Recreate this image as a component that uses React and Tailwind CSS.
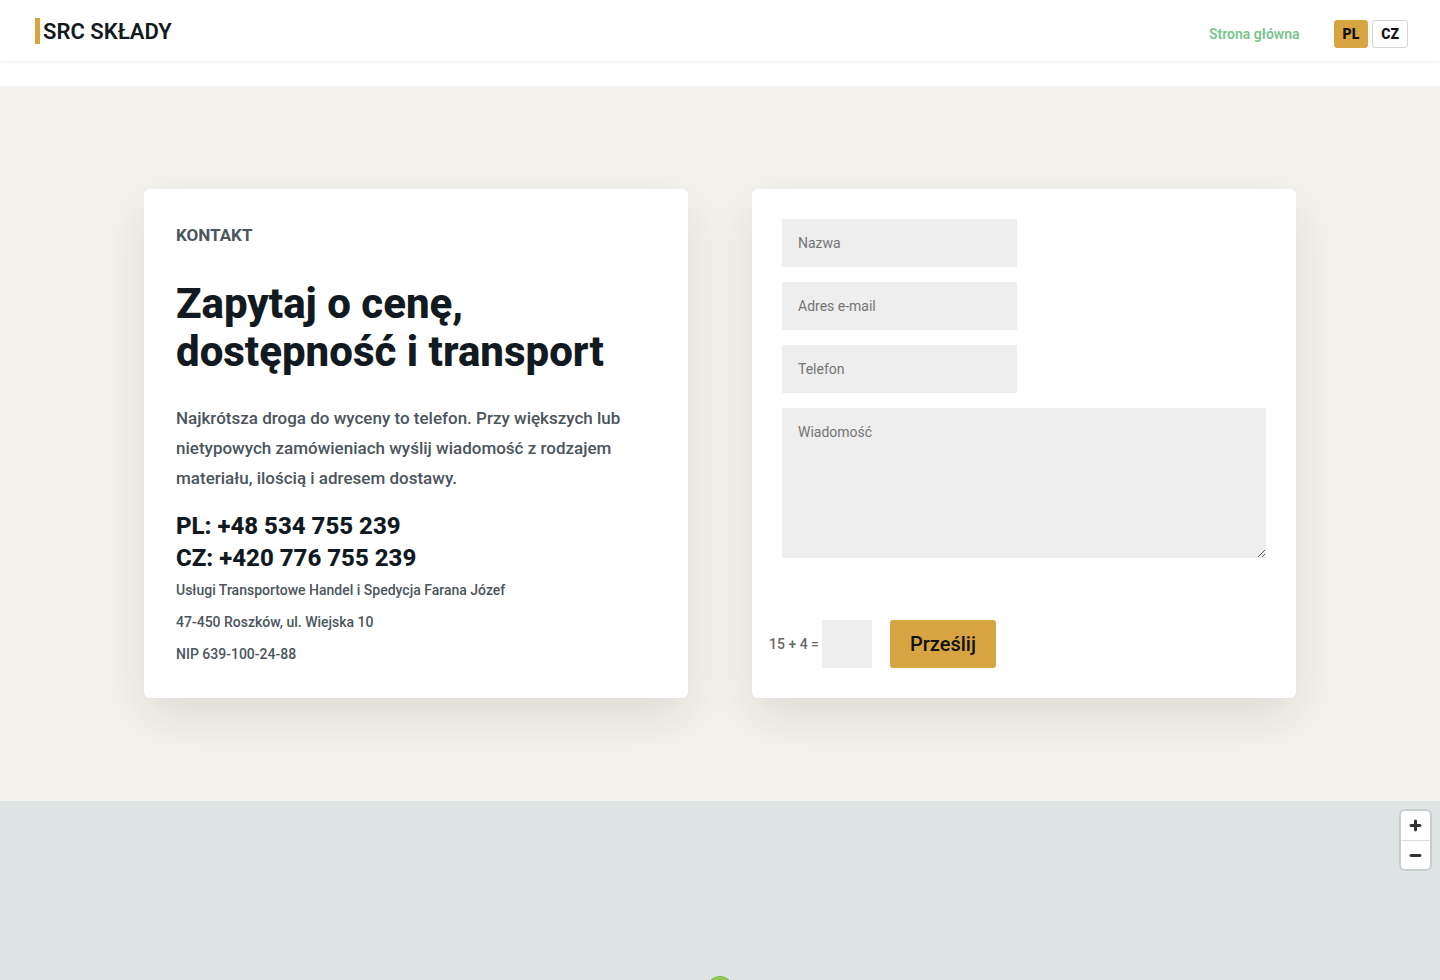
import { useState } from "react";

const languages = ["PL", "CZ"];

const fields = [
  { id: "name", label: "Nazwa", type: "text" },
  { id: "email", label: "Adres e-mail", type: "email" },
  { id: "phone", label: "Telefon", type: "tel" },
];

const company = [
  "Usługi Transportowe Handel i Spedycja Farana Józef",
  "47-450 Roszków, ul. Wiejska 10",
  "NIP 639-100-24-88",
];

function Header() {
  const [lang, setLang] = useState("PL");

  return (
    <header className="relative z-10 flex h-[61px] items-center justify-between bg-white px-8 shadow-[0_1px_4px_rgba(0,0,0,0.08)]">
      <a href="#" className="flex items-center gap-[3px] pl-[3px] text-[22px] font-semibold text-[#111a20]">
        <span className="h-[26px] w-[5px] bg-[#d8a441]" />
        <span className="pt-[2px]">SRC SKŁADY</span>
      </a>
      <nav className="flex items-center pt-[7px]">
        <a href="#" className="mr-[34px] text-sm font-semibold text-[#7ac58e]">
          Strona główna
        </a>
        <div className="flex gap-1">
          {languages.map((code) => (
            <button
              key={code}
              type="button"
              onClick={() => setLang(code)}
              className={
                code === lang
                  ? "h-7 rounded-[3px] border border-[#d8a441] bg-[#d8a441] px-2 text-sm font-black text-[#111]"
                  : "h-7 rounded-[3px] border border-[#d5d5d5] bg-white px-2 text-sm font-black text-[#111]"
              }
            >
              {code}
            </button>
          ))}
        </div>
      </nav>
    </header>
  );
}

function ContactCard() {
  return (
    <div className="rounded-md bg-white px-8 pt-8 pb-7 font-medium text-[#4b555c] shadow-[0_18px_50px_rgba(40,25,20,0.11)]">
      <p className="text-[17px] leading-7 font-bold">KONTAKT</p>
      <h1 className="mt-[31px] text-[42px] leading-12 font-extrabold text-[#111a20]">
        Zapytaj o cenę, dostępność i transport
      </h1>
      <p className="mt-[27px] text-[17px] leading-[30px]">
        Najkrótsza droga do wyceny to telefon. Przy większych lub nietypowych
        zamówieniach wyślij wiadomość z rodzajem materiału, ilością i adresem
        dostawy.
      </p>
      <div className="mt-[17px] flex flex-col text-2xl leading-8 font-extrabold text-[#111a20]">
        <a href="tel:+48534755239">PL: +48 534 755 239</a>
        <a href="tel:+420776755239">CZ: +420 776 755 239</a>
      </div>
      {company.map((line) => (
        <p key={line} className="text-sm leading-8">
          {line}
        </p>
      ))}
    </div>
  );
}

function ContactForm() {
  return (
    <form
      onSubmit={(e) => e.preventDefault()}
      className="flex flex-col rounded-md bg-white py-[30px] text-sm text-[#666] shadow-[0_18px_50px_rgba(40,25,20,0.11)]"
    >
      <div className="flex flex-col gap-[15px] px-[30px]">
        {fields.map((field) => (
          <input
            key={field.id}
            id={field.id}
            type={field.type}
            aria-label={field.label}
            placeholder={field.label}
            className="h-12 w-[235px] bg-[#eee] px-4 placeholder:text-[#757575]"
          />
        ))}
        <textarea
          id="message"
          aria-label="Wiadomość"
          placeholder="Wiadomość"
          className="block h-[150px] w-full bg-[#eee] p-4 leading-4 placeholder:text-[#757575]"
        />
      </div>
      <div className="mt-auto flex items-center pl-[17px]">
        <label htmlFor="captcha" className="mr-[3px] font-medium">
          15 + 4 =
        </label>
        <input id="captcha" type="text" className="h-12 w-[50px] bg-[#eee] px-4" />
        <button
          type="submit"
          className="ml-[18px] h-12 rounded-[3px] bg-[#d8a441] px-5 text-xl font-medium text-[#111]"
        >
          Prześlij
        </button>
      </div>
    </form>
  );
}

function MapView() {
  return (
    <section className="relative min-h-[179px] flex-1 overflow-hidden bg-[#dee4e4]">
      <div className="absolute top-2 right-2 flex w-[33px] flex-col overflow-hidden rounded-md border-2 border-[#c8cecf] bg-white">
        <button type="button" aria-label="Przybliż" className="flex h-[30px] items-center justify-center border-b border-[#ddd]">
          <svg viewBox="0 0 29 29" className="size-[29px] shrink-0" fill="#333">
            <path d="M14.5 8.5c-.75 0-1.5.75-1.5 1.5v3h-3c-.75 0-1.5.75-1.5 1.5S9.25 16 10 16h3v3c0 .75.75 1.5 1.5 1.5S16 19.75 16 19v-3h3c.75 0 1.5-.75 1.5-1.5S19.75 13 19 13h-3v-3c0-.75-.75-1.5-1.5-1.5z" />
          </svg>
        </button>
        <button type="button" aria-label="Oddal" className="flex h-7 items-center justify-center">
          <svg viewBox="0 0 29 29" className="size-[29px] shrink-0" fill="#333">
            <path d="M10 13c-.75 0-1.5.75-1.5 1.5S9.25 16 10 16h9c.75 0 1.5-.75 1.5-1.5S19.75 13 19 13h-9z" />
          </svg>
        </button>
      </div>
      {/* marker, only its top shows above the fold */}
      <svg
        viewBox="0 0 27 41"
        className="absolute top-[175px] left-1/2 h-[41px] w-[27px] -translate-x-1/2"
      >
        <path
          d="M13.5 .5C6.3 .5 .5 6.3 .5 13.5c0 7.5 9 18 13 27 4-9 13-19.500 13-27C26.500 6.300 20.700 .5 13.500 .5z"
          fill="#92ca4f"
          stroke="#84b64a"
        />
      </svg>
    </section>
  );
}

export default function App() {
  return (
    <div className="flex min-h-screen flex-col bg-white font-[Roboto,'Open_Sans',sans-serif]">
      <Header />
      <main className="mt-[25px] flex flex-1 flex-col">
        <section className="bg-[#f4f2ec] py-[103px]">
          <div className="mx-auto grid w-4/5 grid-cols-2 gap-16">
            <ContactCard />
            <ContactForm />
          </div>
        </section>
        <MapView />
      </main>
    </div>
  );
}
